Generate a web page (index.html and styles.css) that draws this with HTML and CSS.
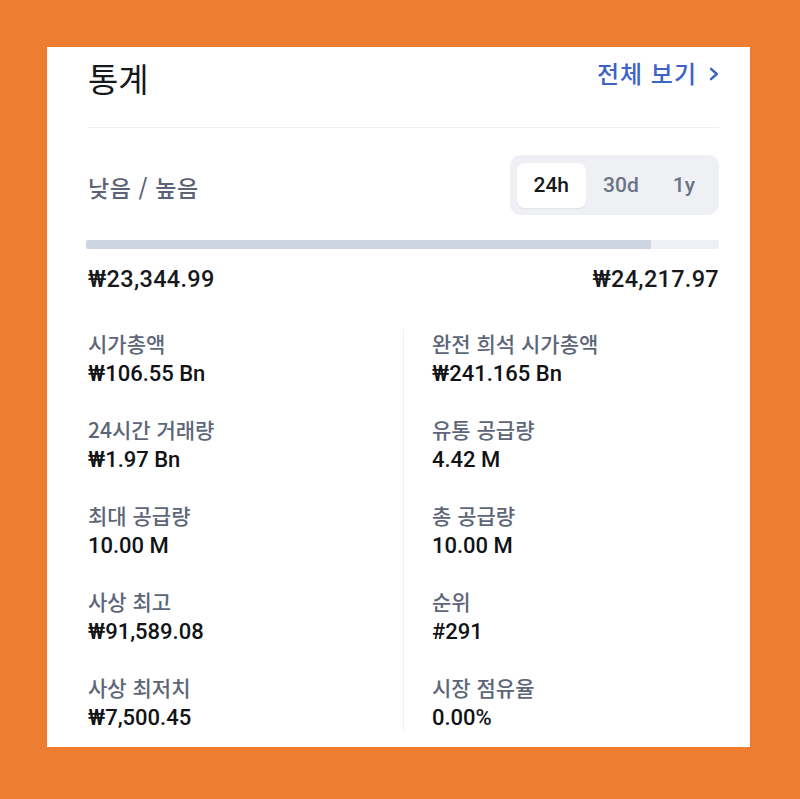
FILE: index.html
```html
<!DOCTYPE html>
<html lang="ko">
<head>
<meta charset="utf-8">
<title>통계</title>
<link rel="stylesheet" href="styles.css">
</head>
<body>
<div class="card">
  <div class="header">
    <h1 class="title">통계</h1>
    <a class="more" href="#">전체 보기
      <svg class="chev" width="10" height="14" viewBox="0 0 10 14"><path d="M2 1.8 L7.8 7 L2 12.2" fill="none" stroke="#3c63c5" stroke-width="2.4" stroke-linecap="round" stroke-linejoin="round"/></svg>
    </a>
  </div>

  <div class="range-row">
    <div class="range-label">낮음 / 높음</div>
    <div class="toggle">
      <span class="opt active">24h</span>
      <span class="opt">30d</span>
      <span class="opt">1y</span>
    </div>
  </div>

  <div class="bar"><div class="bar-fill" style="width:89.3%"></div></div>

  <div class="prices">
    <span>₩23,344.99</span>
    <span>₩24,217.97</span>
  </div>

  <div class="stats">
    <div class="col left">
      <div class="stat"><div class="label">시가총액</div><div class="value">₩106.55 Bn</div></div>
      <div class="stat"><div class="label">24시간 거래량</div><div class="value">₩1.97 Bn</div></div>
      <div class="stat"><div class="label">최대 공급량</div><div class="value">10.00 M</div></div>
      <div class="stat"><div class="label">사상 최고</div><div class="value">₩91,589.08</div></div>
      <div class="stat"><div class="label">사상 최저치</div><div class="value">₩7,500.45</div></div>
    </div>
    <div class="col right">
      <div class="stat"><div class="label">완전 희석 시가총액</div><div class="value">₩241.165 Bn</div></div>
      <div class="stat"><div class="label">유통 공급량</div><div class="value">4.42 M</div></div>
      <div class="stat"><div class="label">총 공급량</div><div class="value">10.00 M</div></div>
      <div class="stat"><div class="label">순위</div><div class="value">#291</div></div>
      <div class="stat"><div class="label">시장 점유율</div><div class="value">0.00%</div></div>
    </div>
  </div>
</div>
</body>
</html>
```

FILE: styles.css
```css
* { box-sizing: border-box; }
html, body { margin: 0; padding: 0; }
body {
  background: #ec7d31;
  font-family: Roboto, "Noto Sans CJK KR", sans-serif;
  width: 800px;
  height: 799px;
  overflow: hidden;
  padding: 47px 0 0 47px;
}
.card {
  width: 703px;
  height: 700px;
  background: #ffffff;
  padding: 10px 31px 0 41px;
}
.header {
  display: flex;
  justify-content: space-between;
  align-items: flex-start;
  padding-bottom: 28px;
  border-bottom: 1.5px solid #eef0f2;
}
.title {
  margin: 0;
  font-family: "Noto Sans CJK KR", sans-serif;
  font-size: 33px;
  line-height: 42px;
  font-weight: 400;
  color: #16181c;
}
.more {
  display: flex;
  align-items: center;
  gap: 12px;
  margin-top: 1px;
  font-family: "Noto Sans CJK KR", sans-serif;
  font-size: 24px;
  line-height: 30px;
  font-weight: 500;
  letter-spacing: 1px;
  color: #3c63c5;
  text-decoration: none;
}
.chev { display: block; margin-top: 2px; }
.range-row {
  display: flex;
  justify-content: space-between;
  align-items: center;
  margin-top: 27px;
}
.range-label {
  font-family: "Noto Sans CJK KR", sans-serif;
  font-size: 23px;
  line-height: 30px;
  font-weight: 500;
  letter-spacing: 0.6px;
  color: #5b6476;
  margin-top: 3px;
}
.toggle {
  display: flex;
  background: #eef0f4;
  border-radius: 11px;
  padding: 8px 7px 7px 7px;
}
.opt {
  display: block;
  padding: 0 17px;
  height: 45px;
  line-height: 45px;
  font-size: 21px;
  font-weight: 500;
  color: #6b7487;
  border-radius: 8px;
}
.opt.active {
  background: #ffffff;
  color: #17191d;
  box-shadow: 0 1px 2px rgba(0,0,0,0.06);
}
.bar {
  margin: 25px 0 0 -2px;
  height: 9px;
  background: #edf0f4;
  border-radius: 2px;
  overflow: hidden;
}
.bar-fill {
  height: 100%;
  background: #cdd5e3;
}
.prices {
  display: flex;
  justify-content: space-between;
  margin-top: 15px;
  font-size: 23.5px;
  line-height: 30px;
  font-weight: 500;
  color: #17191d;
  letter-spacing: 0.3px;
}
.stats {
  display: flex;
  margin-top: 35px;
}
.col {
  display: flex;
  flex-direction: column;
  gap: 30px;
}
.col.left { width: 315px; }
.col.right {
  border-left: 1.5px solid #eef0f2;
  padding-left: 28px;
  padding-bottom: 3px;
}
.stat { height: 56px; }
.label {
  font-family: "Noto Sans CJK KR", sans-serif;
  font-size: 21px;
  line-height: 28px;
  font-weight: 500;
  color: #5d6679;
}
.value {
  margin-top: 3px;
  font-size: 22px;
  line-height: 27px;
  font-weight: 500;
  color: #111316;
}
```
